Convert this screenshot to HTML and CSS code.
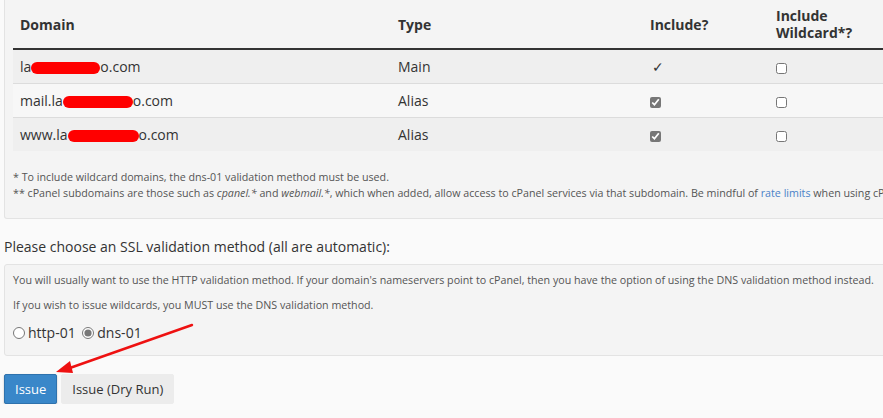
FILE: index.html
```html
<!DOCTYPE html>
<html lang="en">
<head>
  <meta charset="UTF-8" />
  <title>Issue certificate</title>
  <link rel="stylesheet" href="styles.css">
</head>
<body>
  <div class="page">
    <div class="well domains">
      <table class="domain-table">
        <colgroup>
          <col class="c-domain"><col class="c-type"><col class="c-inc"><col class="c-wild">
        </colgroup>
        <thead>
          <tr>
            <th>Domain</th>
            <th>Type</th>
            <th>Include?</th>
            <th>Include Wildcard*?</th>
          </tr>
        </thead>
        <tbody>
          <tr>
            <td>la<span class="redact r1"></span>o.com</td>
            <td>Main</td>
            <td><span class="tick">&#10003;</span></td>
            <td><input type="checkbox"></td>
          </tr>
          <tr>
            <td>mail.la<span class="redact r2"></span>o.com</td>
            <td>Alias</td>
            <td><input type="checkbox" class="locked" checked></td>
            <td><input type="checkbox"></td>
          </tr>
          <tr>
            <td>www.la<span class="redact r3"></span>o.com</td>
            <td>Alias</td>
            <td><input type="checkbox" class="locked" checked></td>
            <td><input type="checkbox"></td>
          </tr>
        </tbody>
      </table>
      <div class="notes">
        <p>* To include wildcard domains, the dns-01 validation method must be used.</p>
        <p>** cPanel subdomains are those such as <em>cpanel.*</em> and <em>webmail.*</em>, which when added, allow access to cPanel services via that subdomain. Be mindful of <a href="#">rate limits</a> when using cPanel subdomains.</p>
      </div>
    </div>

    <p class="choose">Please choose an SSL validation method (all are automatic):</p>

    <div class="well method">
      <p>You will usually want to use the HTTP validation method. If your domain's nameservers point to cPanel, then you have the option of using the DNS validation method instead.</p>
      <p>If you wish to issue wildcards, you MUST use the DNS validation method.</p>
      <div class="radios">
        <label><input type="radio" name="method">http-01</label>
        <label><input type="radio" name="method" class="locked" checked>dns-01</label>
      </div>
    </div>

    <div class="actions">
      <button class="btn btn-primary">Issue</button>
      <button class="btn btn-default">Issue (Dry Run)</button>
    </div>

    <svg class="arrow" width="200" height="70" viewBox="0 0 200 70">
      <line x1="192" y1="8" x2="67" y2="52" stroke="#ee1111" stroke-width="2.4" stroke-linecap="round"/>
      <polygon points="56,55 70,44 73,56" fill="#ee1111"/>
    </svg>
  </div>
</body>
</html>
```

FILE: styles.css
```css
body {
  margin: 0;
  background: #fafafa;
  font-family: "Open Sans", Arial, sans-serif;
  font-size: 14px;
  color: #333;
  overflow: hidden;
}
.page {
  position: relative;
  width: 1100px;
  padding-left: 4px;
}
.well {
  background: #f4f4f4;
  border: 1px solid #e3e3e3;
  border-radius: 3px;
}
.domains {
  margin-top: -10px;
  padding: 0 8px 17px 8px;
  border-top: none;
}
.domain-table {
  border-collapse: collapse;
  table-layout: fixed;
  width: 880px;
}
.c-domain { width: 378px; }
.c-type { width: 252px; }
.c-inc { width: 126px; }
.c-wild { width: 124px; }
.domain-table th {
  text-align: left;
  font-weight: bold;
  height: 48px;
  padding: 10px 7px 0 7px;
  vertical-align: middle;
  line-height: 17px;
  border-bottom: 2px solid #333;
}
.domain-table th:last-child {
  padding-right: 40px;
}
.domain-table td {
  height: 33px;
  padding: 0 7px;
  border-top: 1px solid #dcdcdc;
  vertical-align: middle;
}
.domain-table tbody tr:nth-child(odd) { background: #efefef; }
.domain-table tbody tr:nth-child(even) { background: #f7f7f7; }
.domain-table tbody tr:first-child td { border-top: none; }
.domain-table input[type=checkbox] {
  margin: 0;
  width: 11px;
  height: 11px;
  vertical-align: middle;
}
.locked {
  accent-color: #777;
  pointer-events: none;
}
.tick {
  font-size: 14px;
  padding-left: 2px;
}
.redact {
  display: inline-block;
  height: 12px;
  background: #ff0000;
  border-radius: 6px;
  vertical-align: middle;
}
.r1 { width: 69px; }
.r2 { width: 70px; }
.r3 { width: 71px; }
.notes {
  padding: 18px 0 0 0;
  font-size: 10.7px;
  color: #555;
}
.notes p {
  margin: 0;
  line-height: 16px;
  white-space: nowrap;
}
.notes a {
  color: #4a82c8;
  text-decoration: none;
}
.choose {
  margin: 18px 0 8px 0;
  font-size: 14px;
}
.method {
  padding: 8px 8px 8px 8px;
  font-size: 10.7px;
  color: #555;
}
.method p {
  margin: 0 0 10px 0;
  line-height: 15px;
  white-space: nowrap;
}
.radios {
  font-size: 14px;
  color: #333;
  margin-top: 4px;
  height: 24px;
}
.radios label {
  margin-right: 3px;
}
.radios input {
  margin: 0 3px 0 0;
  width: 12px;
  height: 12px;
  vertical-align: -1px;
}
.actions {
  margin-top: 18px;
  display: flex;
  gap: 4px;
}
.btn {
  font-family: "Open Sans", Arial, sans-serif;
  font-size: 13px;
  height: 30px;
  padding: 0 10px;
  border-radius: 2px;
  cursor: pointer;
}
.btn-primary {
  background: #3987c9;
  border: 1px solid #2e72ad;
  color: #fff;
  box-shadow: 0 1px 2px rgba(0, 0, 0, 0.25);
}
.btn-default {
  background: #ececec;
  border: 1px solid #ececec;
  color: #333;
}
.arrow {
  position: absolute;
  left: 0;
  top: 327px;
}
```
